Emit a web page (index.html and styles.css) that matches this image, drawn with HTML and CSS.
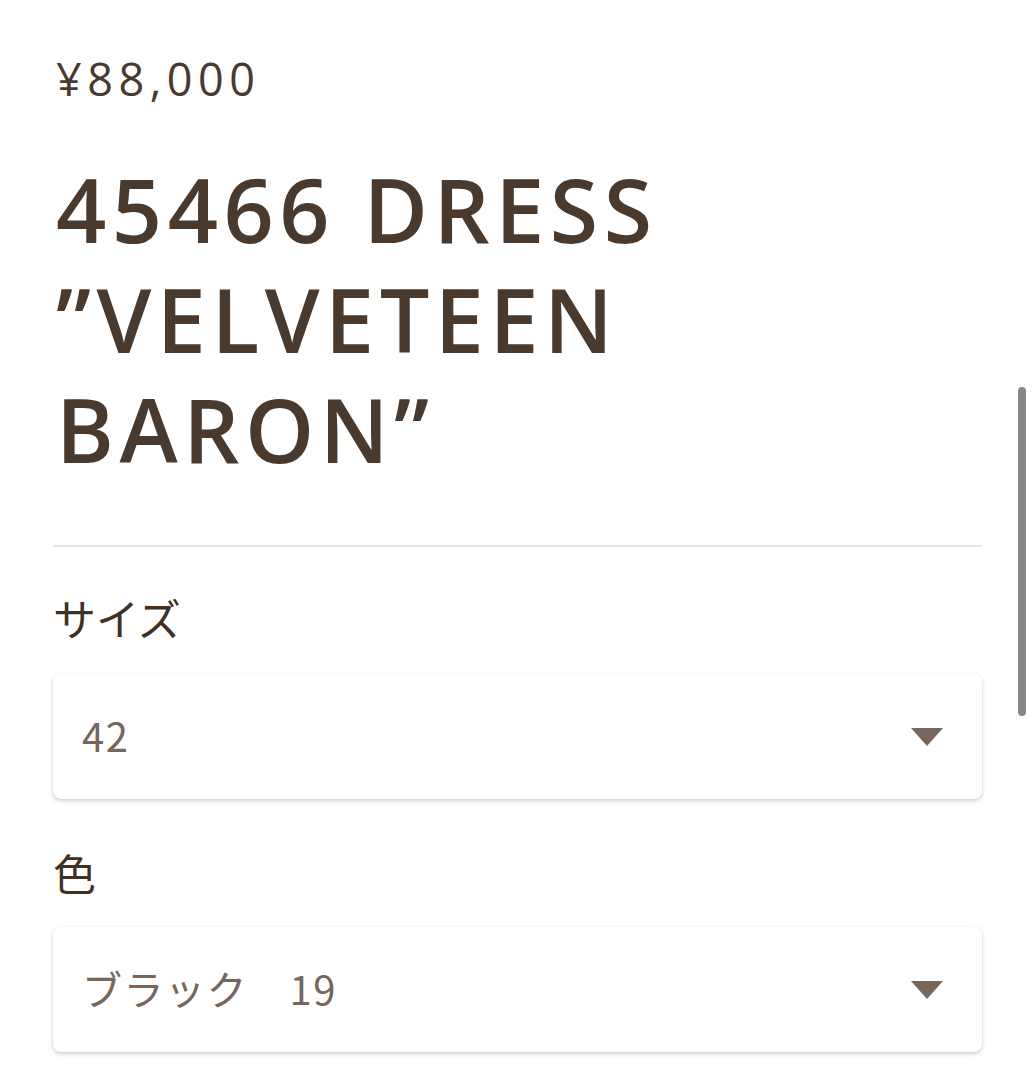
FILE: index.html
```html
<!DOCTYPE html>
<html lang="ja">
<head>
<meta charset="utf-8">
<link rel="stylesheet" href="styles.css">
</head>
<body>
<main class="product">
  <p class="price">¥88,000</p>
  <h1 class="title">45466 DRESS<br>”VELVETEEN<br>BARON”</h1>
  <hr class="divider">
  <div class="field">
    <label class="label">サイズ</label>
    <div class="select">
      <span class="value">42</span>
      <svg class="arrow" viewBox="0 0 32 18" width="32" height="18"><path d="M0 0H32L16 18Z" fill="#76665b"/></svg>
    </div>
  </div>
  <div class="field field-color">
    <label class="label">色</label>
    <div class="select">
      <span class="value">ブラック　19</span>
      <svg class="arrow" viewBox="0 0 32 18" width="32" height="18"><path d="M0 0H32L16 18Z" fill="#76665b"/></svg>
    </div>
  </div>
</main>
<div class="scrollbar"></div>
</body>
</html>
```
FILE: styles.css
```css
html, body {
  margin: 0;
  padding: 0;
  background: #ffffff;
}
body {
  font-family: "Open Sans", "Noto Sans CJK JP", sans-serif;
  color: #4a3a2d;
  overflow: hidden;
  height: 1080px;
}
.product {
  width: 929px;
  margin-left: 53px;
  padding-top: 51px;
}
.price {
  margin: 0 0 0 3px;
  font-size: 45px;
  line-height: 56px;
  letter-spacing: 5.5px;
  font-weight: 400;
}
.title {
  margin: 47px 0 0 3px;
  font-size: 88px;
  line-height: 110px;
  font-weight: 600;
  letter-spacing: 5.5px;
}
.divider {
  margin: 61px 0 0 0;
  border: 0;
  height: 2px;
  background: #e6e6e6;
}
.field {
  display: flex;
  flex-direction: column;
}
.label {
  font-family: "Noto Sans CJK JP", sans-serif;
  font-size: 43px;
  line-height: 52px;
  margin-top: 44px;
  margin-bottom: 31px;
  color: #3f3126;
}
.field-color .label {
  margin-top: 47px;
  margin-bottom: 29px;
}
.select {
  height: 125px;
  box-sizing: border-box;
  border-radius: 8px;
  background: #fff;
  box-shadow: 0 2px 4px rgba(0,0,0,0.18), 0 0 2px rgba(0,0,0,0.06);
  display: flex;
  align-items: center;
  justify-content: space-between;
  padding: 0 39px 4px 29px;
}
.value {
  font-family: "Noto Sans CJK JP", sans-serif;
  font-size: 40px;
  line-height: 48px;
  letter-spacing: 1.5px;
  color: #76665b;
}
.arrow {
  display: block;
  margin-top: 4px;
}
.scrollbar {
  position: absolute;
  left: 1018px;
  top: 387px;
  width: 8px;
  height: 329px;
  border-radius: 4px;
  background: #878787;
}
```
